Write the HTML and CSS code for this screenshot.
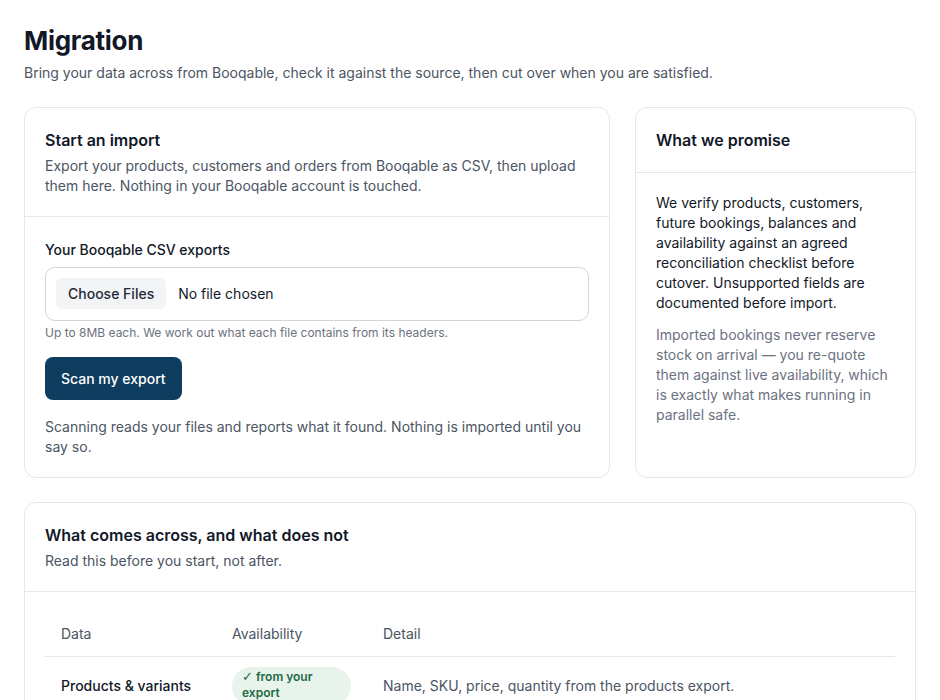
FILE: index.html
```html
<!DOCTYPE html>
<html lang="en">
<head>
    <meta charset="UTF-8">
    <meta name="viewport" content="width=device-width, initial-scale=1.0">
    <title>Migration</title>
    <link rel="stylesheet" href="styles.css">
</head>
<body>

    <h1>Migration</h1>
    <p class="lead">Bring your data across from Booqable, check it against the source, then cut over when you are satisfied.</p>

    <div class="top-grid">
        <section class="card">
            <div class="card-head">
                <h2>Start an import</h2>
                <p>Export your products, customers and orders from Booqable as CSV, then upload them here. Nothing in your Booqable account is touched.</p>
            </div>
            <div class="card-body import-body">
                <label class="field-label" for="csv-files">Your Booqable CSV exports</label>
                <div class="file-box">
                    <input type="file" id="csv-files" multiple accept=".csv">
                </div>
                <p class="hint">Up to 8MB each. We work out what each file contains from its headers.</p>
                <button class="btn-primary" type="button">Scan my export</button>
                <p class="muted">Scanning reads your files and reports what it found. Nothing is imported until you say so.</p>
            </div>
        </section>

        <aside class="card">
            <div class="card-head">
                <h2>What we promise</h2>
            </div>
            <div class="card-body">
                <p class="strong-text">We verify products, customers, future bookings, balances and availability against an agreed reconciliation checklist before cutover. Unsupported fields are documented before import.</p>
                <p class="muted spaced">Imported bookings never reserve stock on arrival — you re-quote them against live availability, which is exactly what makes running in parallel safe.</p>
            </div>
        </aside>
    </div>

    <section class="card">
        <div class="card-head">
            <h2>What comes across, and what does not</h2>
            <p>Read this before you start, not after.</p>
        </div>
        <div class="card-body">
            <table class="data-table">
                <thead>
                    <tr>
                        <th class="col-data">Data</th>
                        <th class="col-avail">Availability</th>
                        <th>Detail</th>
                    </tr>
                </thead>
                <tbody>
                    <tr>
                        <td class="name">Products &amp; variants</td>
                        <td><span class="badge ok"><span class="tick">✓</span> from your export</span></td>
                        <td class="detail">Name, SKU, price, quantity from the products export.</td>
                    </tr>
                    <tr>
                        <td class="name">Customers</td>
                        <td><span class="badge ok"><span class="tick">✓</span> from your export</span></td>
                        <td class="detail">Name, email, phone and billing address from the customers export.</td>
                    </tr>
                </tbody>
            </table>
        </div>
    </section>

</body>
</html>
```

FILE: styles.css
```css
body {
    font-family: 'Inter', 'Liberation Sans', sans-serif;
    margin: 0;
    padding: 25px 24px 24px;
    background-color: #fff;
    color: #111827;
    font-size: 14px;
    line-height: 20px;
}

h1 {
    font-size: 26px;
    line-height: 32px;
    font-weight: 700;
    margin: 0;
    letter-spacing: -0.3px;
}

.lead {
    margin: 6px 0 0;
    color: #4b5563;
}

.top-grid {
    display: grid;
    grid-template-columns: 1fr 281px;
    gap: 25px;
    margin: 24px 0 24px;
}

.card {
    border: 1px solid #e5e7eb;
    border-radius: 12px;
    background-color: #fff;
}

.card-head {
    padding: 20px;
    border-bottom: 1px solid #e5e7eb;
}

.card-head h2 {
    font-size: 16px;
    line-height: 24px;
    font-weight: 600;
    margin: 0;
}

.card-head p {
    margin: 4px 0 0;
    color: #4b5563;
}

.card-body {
    padding: 20px;
}

.card-body p {
    margin: 0;
}

.import-body {
    padding-top: 23px;
}

.field-label {
    display: block;
    font-weight: 500;
}

.file-box {
    margin-top: 7px;
    border: 1px solid #d1d5db;
    border-radius: 10px;
    padding: 10px 10px 11px;
}

.file-box input {
    font-family: inherit;
    font-size: 14px;
    color: #111827;
}

.file-box input::file-selector-button {
    font-family: inherit;
    font-size: 14px;
    font-weight: 500;
    color: #1f2937;
    background-color: #f3f4f6;
    border: none;
    border-radius: 6px;
    padding: 7px 12px;
    margin-right: 12px;
    cursor: pointer;
}

.card-body .hint {
    margin-top: 4px;
    font-size: 12px;
    line-height: 16px;
    color: #6b7280;
}

.btn-primary {
    margin-top: 16px;
    font-family: inherit;
    font-size: 14px;
    font-weight: 500;
    line-height: 19px;
    color: #fff;
    background-color: #0f3d5f;
    border: none;
    border-radius: 8px;
    padding: 12px 16px;
    cursor: pointer;
}

.import-body .muted {
    margin-top: 17px;
}

.muted {
    color: #4b5563;
}

.card-body .spaced {
    margin-top: 12px;
    color: #6b7280;
}

.data-table {
    width: 100%;
    border-collapse: collapse;
}

.data-table th {
    text-align: left;
    font-weight: 400;
    color: #4b5563;
    padding: 12px 16px;
    border-bottom: 1px solid #e5e7eb;
}

.col-data {
    width: 139px;
}

.col-avail {
    width: 119px;
}

.data-table td {
    padding: 10px 16px;
    vertical-align: middle;
    border-bottom: 1px solid #e5e7eb;
}

.data-table .name {
    font-weight: 500;
}

.data-table .detail {
    color: #4b5563;
}

.badge {
    display: inline-block;
    font-size: 12px;
    line-height: 16px;
    font-weight: 600;
    padding: 2px 10px 4px;
    border-radius: 999px;
}

.badge .tick {
    font-family: 'DejaVu Sans', sans-serif;
    font-size: 13px;
    line-height: 1;
}

.badge.ok {
    background-color: #e8f3ec;
    color: #1f6a44;
}
```
